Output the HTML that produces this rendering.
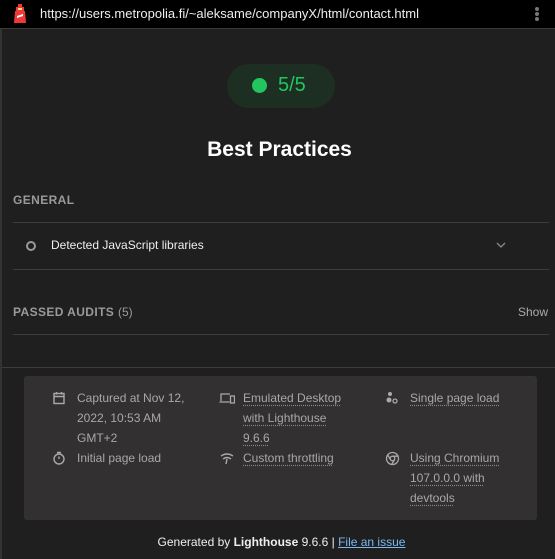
<!DOCTYPE html>
<html><head><meta charset="utf-8"><style>
*{margin:0;padding:0;box-sizing:border-box}
body{width:555px;height:559px;background:#1f1f1f;font-family:"Liberation Sans",sans-serif;position:relative;overflow:hidden;color:#fff}
.a{position:absolute}
.top{left:0;top:0;width:555px;height:29px;background:#000;border-bottom:1px solid #3a3a3a}
.url{left:40px;top:6px;font-size:13px;color:#eee}
.line{left:13px;width:536px;height:1px;background:#3c3c3c}
.sec{font-size:12px;font-weight:bold;color:#9a9a9a;letter-spacing:.4px}
.box{left:24px;top:376px;width:513px;height:144px;background:#323031;border-radius:3px}
.it{font-size:12px;color:#a8a8a8;line-height:20px}
.u{text-decoration:underline dotted #888;text-underline-offset:3px}
svg.i{position:absolute}
</style></head><body>
<div class="a" style="left:0;top:29px;width:2px;height:530px;background:#333"></div>
<div class="a top"></div>
<svg class="a" style="left:14px;top:4px" width="12" height="20" viewBox="0 0 12 20"><rect x="4" y="0" width="4" height="3" fill="#ee3a36"/><rect x="2" y="3" width="8" height="4" fill="#ee3a36"/><rect x="4" y="4" width="4" height="2" fill="#ffe08a"/><path d="M1 7h10l1 12H0z" fill="#ee3a36"/><path d="M3 12l6-2v2l-6 2z" fill="#fff"/></svg>
<div class="a url">https://users.metropolia.fi/~aleksame/companyX/html/contact.html</div>
<div class="a" style="left:535px;top:7px;width:4px;height:4px;border-radius:2px;background:#777;box-shadow:0 5px 0 #777,0 10px 0 #777"></div>
<div class="a" style="left:227px;top:64px;width:108px;height:44px;border-radius:22px;background:#1d2e22"></div>
<div class="a" style="left:252px;top:78px;width:15px;height:15px;border-radius:50%;background:#22c55e"></div>
<div class="a" style="left:278px;top:74px;font-size:20px;color:#22c55e">5/5</div>
<div class="a" style="left:2px;width:555px;top:138px;text-align:center;font-size:21px;font-weight:bold;color:#fff">Best Practices</div>
<div class="a sec" style="left:13px;top:193px">GENERAL</div>
<div class="a line" style="top:222px"></div>
<div class="a" style="left:26px;top:241px;width:10px;height:10px;border-radius:50%;border:2px solid #999"></div>
<div class="a" style="left:51px;top:238px;font-size:12px;color:#eee">Detected JavaScript libraries</div>
<svg class="a" style="left:495px;top:240px" width="12" height="10"><path d="M2 3l4 4 4-4" stroke="#888" fill="none" stroke-width="1.3"/></svg>
<div class="a line" style="top:269px"></div>
<div class="a sec" style="left:13px;top:305px">PASSED AUDITS <span style="font-weight:normal;letter-spacing:0">(5)</span></div>
<div class="a" style="left:518px;top:305px;font-size:12px;color:#aaa">Show</div>
<div class="a line" style="top:334px"></div>
<div class="a" style="left:2px;top:367px;width:553px;height:1px;background:#3c3c3c"></div>
<div class="a box"></div>
<svg class="i" style="left:52px;top:391px" width="14" height="14" viewBox="0 0 14 14" fill="none" stroke="#aaa" stroke-width="1.4"><rect x="2" y="2.5" width="10" height="10"/><path d="M2 5.5h10M4.5 1v2.5M9.5 1v2.5"/></svg>
<div class="a it" style="left:77px;top:388px">Captured at Nov 12,<br>2022, 10:53 AM<br>GMT+2</div>
<svg class="i" style="left:52px;top:451px" width="14" height="14" viewBox="0 0 14 14" fill="none" stroke="#aaa" stroke-width="1.4"><circle cx="7" cy="8" r="5"/><path d="M5 1.5h4M7 8V5.5"/></svg>
<div class="a it" style="left:77px;top:448px">Initial page load</div>
<svg class="i" style="left:219px;top:391px" width="16" height="14" viewBox="0 0 16 14" fill="none" stroke="#aaa" stroke-width="1.3"><path d="M2 10V3h9M0.5 11h10"/><rect x="11.5" y="5" width="4" height="7"/></svg>
<div class="a it u" style="left:243px;top:388px">Emulated Desktop<br>with Lighthouse<br>9.6.6</div>
<svg class="i" style="left:219px;top:451px" width="16" height="14" viewBox="0 0 16 14" fill="none" stroke="#aaa" stroke-width="1.4"><path d="M2 5q6-4 12 0M4 8q4-3 8 0M8 8l-1 5"/></svg>
<div class="a it u" style="left:243px;top:448px">Custom throttling</div>
<svg class="i" style="left:385px;top:391px" width="14" height="14" viewBox="0 0 14 14" fill="#aaa"><circle cx="5" cy="3" r="2"/><circle cx="4" cy="9" r="2.5"/><circle cx="10" cy="10" r="2" fill="none" stroke="#aaa" stroke-width="1.3"/></svg>
<div class="a it u" style="left:410px;top:388px">Single page load</div>
<svg class="i" style="left:385px;top:451px" width="15" height="15" viewBox="0 0 15 15" fill="none" stroke="#aaa" stroke-width="1.3"><circle cx="7.5" cy="7.5" r="6"/><circle cx="7.5" cy="7.5" r="2.3"/><path d="M7.5 5.2h5.5M5.5 8.7l-2.8-4.8M9.5 8.7l-2.8 4.8"/></svg>
<div class="a it u" style="left:410px;top:448px">Using Chromium<br>107.0.0.0 with<br>devtools</div>
<div class="a" style="left:4px;width:555px;top:535px;text-align:center;font-size:12px;color:#eee">Generated by <b>Lighthouse</b> 9.6.6 | <span style="color:#7cb8f0;text-decoration:underline">File an issue</span></div>
</body></html>
